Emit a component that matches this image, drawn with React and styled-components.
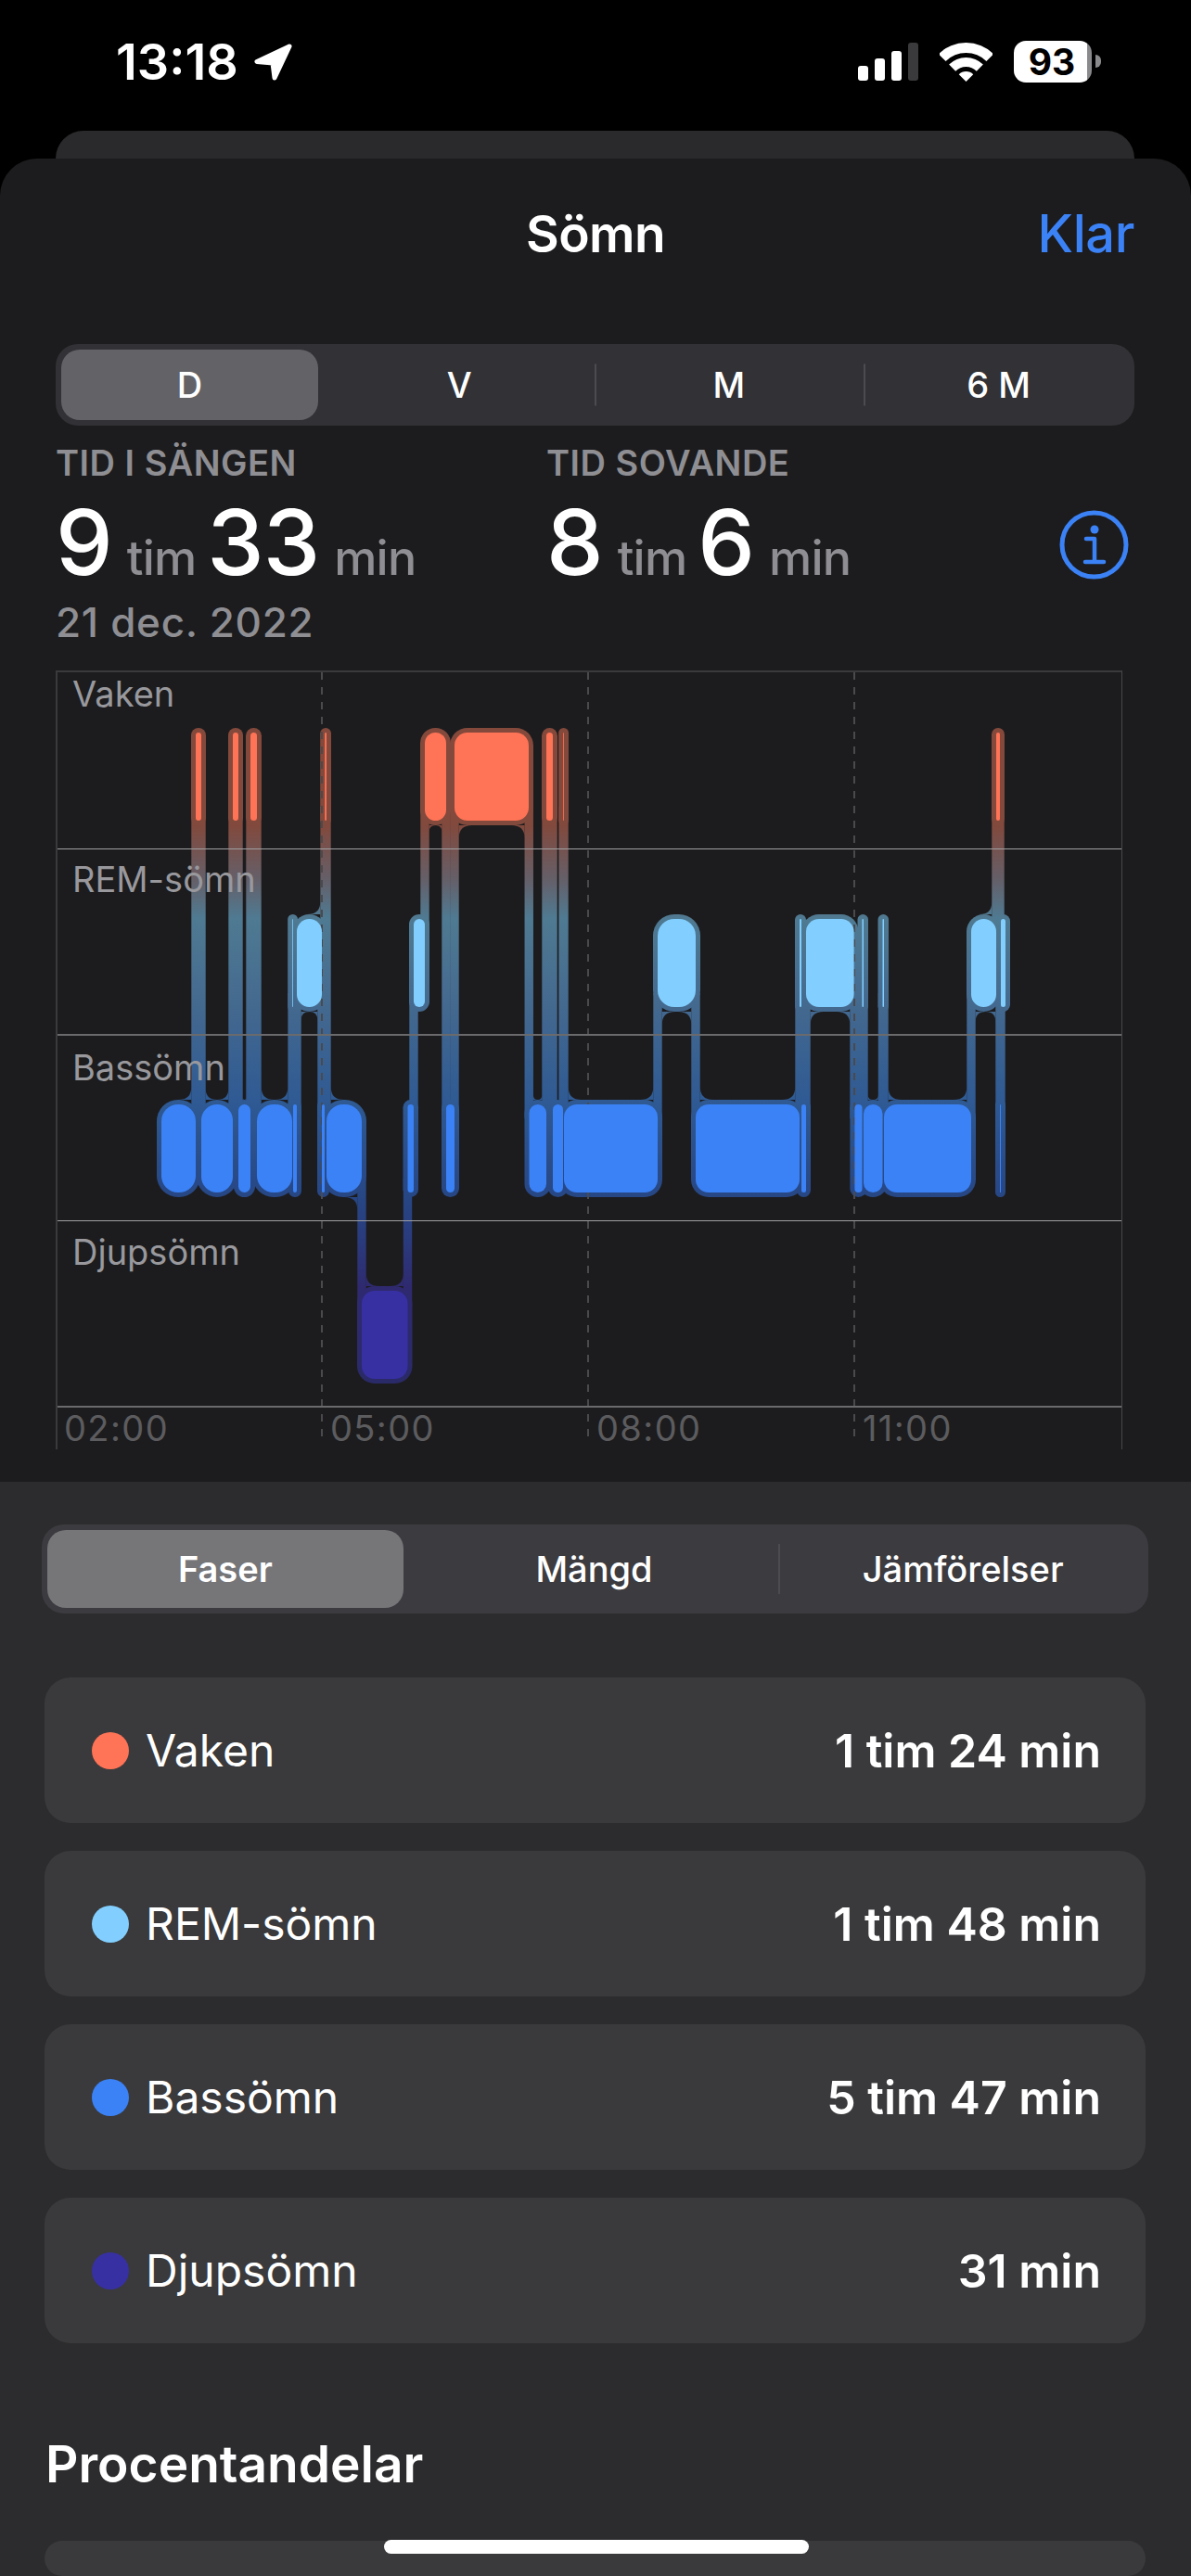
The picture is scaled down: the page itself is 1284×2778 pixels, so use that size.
import React from "react";
import styled, { createGlobalStyle } from "styled-components";

const GlobalStyle = createGlobalStyle`
  * { box-sizing: border-box; }
  html, body { margin: 0; padding: 0; background: #000; }
  body { font-family: Inter, "Liberation Sans", sans-serif; color: #fff; }
`;

const Screen = styled.div`
  position: relative;
  width: 1284px;
  height: 2778px;
  overflow: hidden;
  background: #000;
  display: flex;
  flex-direction: column;
`;

const StatusBar = styled.div`
  height: 141px;
  flex: none;
  padding: 0 97px 8px 125px;
  display: flex;
  align-items: center;
  justify-content: space-between;
`;

const StatusGroup = styled.div`
  display: flex;
  align-items: center;
  gap: ${({ $gap }) => $gap}px;
`;

const Time = styled.div`
  font-size: 54px;
  font-weight: 600;
  line-height: 60px;
`;

const Battery = styled.div`
  position: relative;
  width: 84px;
  height: 45px;
  margin-right: 10px;
  border-radius: 13px;
  background: linear-gradient(90deg, #fff 94%, #8a8a8d 94%);
  color: #000;
  font-size: 39px;
  font-weight: 700;
  line-height: 45px;
  text-align: center;
  padding-right: 2px;

  &::after {
    content: "";
    position: absolute;
    left: 88px;
    top: 15px;
    width: 6px;
    height: 14px;
    border-radius: 0 7px 7px 0;
    background: #8a8a8d;
  }
`;

const BackSheet = styled.div`
  flex: none;
  height: 30px;
  margin: 0 61px 0 60px;
  border-radius: 30px 30px 0 0;
  background: #2a2a2c;
`;

const Sheet = styled.div`
  flex: 1;
  display: flex;
  flex-direction: column;
  border-radius: 40px 40px 0 0;
  background: #1c1c1e;
  overflow: hidden;
`;

const Header = styled.div`
  flex: none;
  height: 162px;
  margin-bottom: 38px;
  padding: 0 61px;
  display: grid;
  grid-template-columns: 1fr auto 1fr;
  align-items: center;
`;

const Title = styled.div`
  grid-column: 2;
  font-size: 55px;
  font-weight: 600;
  letter-spacing: -0.6px;
`;

const DoneButton = styled.div`
  justify-self: end;
  color: #3b82f6;
  font-size: 56px;
  font-weight: 500;
  letter-spacing: -0.4px;
`;

const SegmentTrack = styled.div`
  flex: none;
  height: ${({ $height }) => $height}px;
  margin: ${({ $margin }) => $margin};
  display: grid;
  grid-template-columns: repeat(${({ $count }) => $count}, 1fr);
  border-radius: 24px;
  background: ${({ $bg }) => $bg};
`;

const SegmentCell = styled.div`
  position: relative;
  display: flex;

  &::before {
    content: "";
    display: ${({ $divider }) => ($divider ? "block" : "none")};
    position: absolute;
    left: -1px;
    top: 50%;
    width: 2px;
    height: ${({ $dividerHeight }) => $dividerHeight}px;
    transform: translateY(-50%);
    background: #4c4c50;
  }
`;

const SegmentLabel = styled.div`
  flex: 1;
  margin: 6px 8px 6px 6px;
  display: flex;
  align-items: center;
  justify-content: center;
  border-radius: 20px;
  font-size: 38px;
  font-weight: ${({ $active, $boldActive }) => ($active && $boldActive ? 600 : 450)};
  background: ${({ $active, $activeBg }) => ($active ? $activeBg : "transparent")};
`;

const Stats = styled.div`
  flex: none;
  height: 264px;
  padding: 18px 67px 0 60px;
  display: flex;
`;

const StatColumn = styled.div`
  flex: none;
  width: ${({ $width }) => $width}px;
`;

const StatLabel = styled.div`
  color: #8e8e93;
  font-size: 38px;
  font-weight: 600;
  line-height: 44px;
  letter-spacing: 0.5px;
`;

const StatValue = styled.div`
  height: 96px;
  margin-top: 16px;
  display: flex;
  align-items: baseline;
  line-height: 96px;
`;

const StatNumber = styled.span`
  font-size: 98px;
  font-weight: 500;
  letter-spacing: -1px;
`;

const StatUnit = styled.span`
  margin: 0 12px 0 16px;
  color: #8e8e93;
  font-size: 52px;
  font-weight: 500;
  letter-spacing: -0.8px;
`;

const StatDate = styled.div`
  margin-top: 13px;
  color: #8e8e93;
  font-size: 44px;
  font-weight: 500;
  line-height: 50px;
  letter-spacing: 0.7px;
`;

const InfoIcon = styled.svg`
  margin: 73px 0 0 auto;
  flex: none;
`;

const Chart = styled.div`
  position: relative;
  flex: none;
  width: 1150px;
  height: 840px;
  margin-left: 60px;
  border-top: 2px solid #3a3a3c;
  border-left: 2px solid #3a3a3c;
  border-right: 1px solid #48484a;
`;

const ChartDrawing = styled.svg`
  position: absolute;
  left: -2px;
  top: -2px;
`;

const ChartRow = styled.div`
  position: relative;
  height: ${({ $height }) => $height}px;
  padding: ${({ $top }) => $top}px 0 0 16px;
  border-bottom: ${({ $line }) => $line};
  color: #98989d;
  font-size: 38px;
  line-height: 40px;
`;

const AxisRow = styled.div`
  position: relative;
  display: grid;
  grid-template-columns: repeat(4, 287px);
  height: 45px;
  padding-top: 3px;
  color: #5c5c5f;
  font-size: 38px;
  line-height: 38px;
  letter-spacing: 1.4px;
`;

const AxisLabel = styled.div`
  padding-left: 7px;
`;

const Panel = styled.div`
  flex: none;
  margin-top: 35px;
  height: 1180px;
  padding-top: 46px;
  display: flex;
  flex-direction: column;
  background: #2c2c2e;
`;

const PhaseList = styled.div`
  margin: 69px 49px 0 48px;
  display: flex;
  flex-direction: column;
  gap: 30px;
`;

const PhaseCard = styled.div`
  height: 157px;
  padding: 0 48px 0 51px;
  display: flex;
  align-items: center;
  border-radius: 28px;
  background: #3a3a3c;
`;

const PhaseDot = styled.div`
  width: 40px;
  height: 40px;
  margin-right: 18px;
  border-radius: 50%;
  background: ${({ $color }) => $color};
`;

const PhaseName = styled.div`
  flex: 1;
  font-size: 48px;
  font-weight: 400;
`;

const PhaseValue = styled.div`
  font-size: 50px;
  font-weight: 600;
`;

const SectionHeading = styled.div`
  margin: 100px 0 53px 49px;
  font-size: 55px;
  font-weight: 600;
  line-height: 60px;
`;

const NextCard = styled.div`
  height: 100px;
  margin: 0 49px 0 48px;
  border-radius: 28px;
  background: #3a3a3c;
`;

const HomeIndicator = styled.div`
  position: absolute;
  left: 414px;
  top: 2739px;
  width: 458px;
  height: 15px;
  border-radius: 8px;
  background: #fff;
`;

const COLORS = { W: "#ff7356", R: "#82cfff", B: "#3b82f6", D: "#3730a3" };

const STAGE_ROWS = {
  W: { top: 790, bottom: 885 },
  R: { top: 991, bottom: 1086 },
  B: { top: 1191, bottom: 1286 },
  D: { top: 1392, bottom: 1487 },
};

// page x coordinates of each sleep stage, in time order
const SEGMENTS = [
  ["B", 174, 211], ["W", 211, 217], ["B", 217, 251], ["W", 251, 257],
  ["B", 257, 270], ["W", 270, 277], ["B", 277, 315], ["R", 315.2, 316],
  ["B", 316, 320], ["R", 320, 347], ["B", 347, 350], ["W", 350.2, 352],
  ["B", 352, 390], ["D", 390, 439.5], ["B", 439.5, 446], ["R", 446, 458],
  ["W", 458, 481], ["B", 481, 490], ["W", 490, 570], ["B", 570.5, 589],
  ["W", 589, 596], ["B", 596, 607], ["W", 607.2, 608], ["B", 608, 709],
  ["R", 709, 750], ["B", 750, 862], ["R", 862, 864], ["B", 864, 869],
  ["R", 869, 920.6], ["B", 921.4, 929.5], ["R", 929.5, 931], ["B", 931, 951.5],
  ["R", 951.5, 953], ["B", 953, 1047], ["R", 1047, 1074], ["W", 1074, 1078],
  ["B", 1078, 1079], ["R", 1079, 1084],
];

const HALO = 5;
const STEM = 4.7;
const FILLET = 14;

const cornerRadius = (width) => (width < 48 ? Math.min(width / 2, 18) : 14);

const merge = (spans) => {
  const sorted = [...spans].sort((a, b) => a[0] - b[0]);
  return sorted.reduce((out, span) => {
    const last = out[out.length - 1];
    if (last && span[0] <= last[1]) last[1] = Math.max(last[1], span[1]);
    else out.push([...span]);
    return out;
  }, []);
};

const stems = SEGMENTS.slice(1).flatMap((seg, i) => {
  const prev = SEGMENTS[i];
  if (prev[0] === seg[0]) return [];
  const x = (prev[2] + seg[1]) / 2;
  const upper = STAGE_ROWS[prev[0]].top < STAGE_ROWS[seg[0]].top ? prev[0] : seg[0];
  const lower = upper === prev[0] ? seg[0] : prev[0];
  return [{ x1: x - STEM, x2: x + STEM, y1: STAGE_ROWS[upper].bottom - 15, y2: STAGE_ROWS[lower].top + 15 }];
});

// concave corners where stems leave the halo of a row
const fillets = Object.entries(STAGE_ROWS).flatMap(([key, row]) => {
  const halos = merge(
    SEGMENTS.filter((s) => s[0] === key).map((s) => [s[1] - HALO, s[2] + HALO])
  );
  return [[row.top - HALO, -1], [row.bottom + HALO, 1]].flatMap(([y, dir]) => {
    const crossing = merge(
      stems.filter((s) => s.y1 < y + dir && s.y2 > y + dir).map((s) => [s.x1, s.x2])
    );
    const paths = [];
    crossing.forEach(([c1, c2], i) => {
      const halo = halos.find((h) => h[0] <= c2 && h[1] >= c1);
      if (!halo) return;
      const prev = crossing[i - 1];
      const next = crossing[i + 1];
      const left = prev && prev[1] > halo[0] ? (c1 - prev[1]) / 2 : c1 - halo[0] - 14;
      const right = next && next[0] < halo[1] ? (next[0] - c2) / 2 : halo[1] - c2 - 14;
      const rl = Math.min(FILLET, left);
      const rr = Math.min(FILLET, right);
      if (rl > 1) paths.push(`M${c1} ${y}L${c1 - rl} ${y}Q${c1} ${y} ${c1} ${y + dir * rl}Z`);
      if (rr > 1) paths.push(`M${c2} ${y}L${c2 + rr} ${y}Q${c2} ${y} ${c2} ${y + dir * rr}Z`);
    });
    return paths;
  });
});

const HALO_STOPS = [
  [785, "#84493b"], [890, "#82493d"], [950, "#64606a"], [990, "#4f7a92"],
  [1086, "#44698f"], [1186, "#2f5a93"], [1291, "#274684"], [1340, "#2a3a7c"],
  [1387, "#2f2a70"], [1492, "#2a2a68"],
];

const SleepChart = () => (
  <ChartDrawing width="1150" height="840" viewBox="60 723 1150 840">
    <defs>
      <linearGradient id="halo" gradientUnits="userSpaceOnUse" x1="0" y1="785" x2="0" y2="1492">
        {HALO_STOPS.map(([y, color]) => (
          <stop key={y} offset={(y - 785) / 707} stopColor={color} />
        ))}
      </linearGradient>
    </defs>
    <g fill="url(#halo)">
      {SEGMENTS.map(([key, x1, x2]) => {
        const width = x2 - x1;
        return (
          <rect
            key={`h${x1}`}
            x={x1 - HALO}
            y={STAGE_ROWS[key].top - HALO}
            width={width + HALO * 2}
            height={105}
            rx={Math.min(cornerRadius(width) + HALO, (width + HALO * 2) / 2)}
          />
        );
      })}
      {stems.map((s) => (
        <rect key={`s${s.x1}`} x={s.x1} y={s.y1} width={s.x2 - s.x1} height={s.y2 - s.y1} />
      ))}
      {fillets.map((d) => (
        <path key={d} d={d} />
      ))}
    </g>
    {[347, 634, 921].map((x) => (
      <line key={x} x1={x} x2={x} y1="725" y2="1557" stroke="#4a4a4d" strokeWidth="2" strokeDasharray="8 8" />
    ))}
    {SEGMENTS.map(([key, x1, x2]) => {
      const width = x2 - x1;
      return (
        <rect
          key={`b${x1}`}
          x={x1}
          y={STAGE_ROWS[key].top}
          width={width}
          height={95}
          rx={cornerRadius(width)}
          fill={COLORS[key]}
        />
      );
    })}
  </ChartDrawing>
);

const wifiBand = (outer, inner) => {
  const a = Math.SQRT1_2;
  const cx = 28.5;
  const cy = 42;
  const o = outer * a;
  const i = inner * a;
  return `M${cx - o} ${cy - o}A${outer} ${outer} 0 0 1 ${cx + o} ${cy - o}L${cx + i} ${cy - i}A${inner} ${inner} 0 0 0 ${cx - i} ${cy - i}Z`;
};

const SEGMENTS_TOP = ["D", "V", "M", "6 M"];
const SEGMENTS_BOTTOM = ["Faser", "Mängd", "Jämförelser"];

const PHASES = [
  { name: "Vaken", value: "1 tim 24 min", color: COLORS.W },
  { name: "REM-sömn", value: "1 tim 48 min", color: COLORS.R },
  { name: "Bassömn", value: "5 tim 47 min", color: COLORS.B },
  { name: "Djupsömn", value: "31 min", color: COLORS.D },
];

const Segmented = ({ items, height, margin, bg, activeBg, dividerHeight, boldActive }) => (
  <SegmentTrack $count={items.length} $height={height} $margin={margin} $bg={bg}>
    {items.map((item, i) => (
      <SegmentCell key={item} $divider={i > 1} $dividerHeight={dividerHeight}>
        <SegmentLabel $active={i === 0} $activeBg={activeBg} $boldActive={boldActive}>
          {item}
        </SegmentLabel>
      </SegmentCell>
    ))}
  </SegmentTrack>
);

const App = () => (
  <Screen>
    <GlobalStyle />
    <StatusBar>
      <StatusGroup $gap={17}>
        <Time>13:18</Time>
        <svg width="41" height="40" viewBox="0 0 41 40">
          <path d="M38 3L3 19.5L20 21L22 37Z" fill="#fff" stroke="#fff" strokeWidth="5" strokeLinejoin="round" />
        </svg>
      </StatusGroup>
      <StatusGroup $gap={23}>
        <svg width="65" height="41" viewBox="0 0 65 41">
          <rect x="0" y="25" width="11" height="16" rx="3" fill="#fff" />
          <rect x="18" y="17" width="11" height="24" rx="3" fill="#fff" />
          <rect x="36" y="9" width="11" height="32" rx="3" fill="#fff" />
          <rect x="54" y="0" width="11" height="41" rx="3" fill="#3a3a3c" />
        </svg>
        <svg width="57" height="42" viewBox="0 0 57 42" fill="#fff">
          <path d={wifiBand(42, 31)} />
          <path d={wifiBand(26, 16)} />
          <path d={wifiBand(11, 0)} />
        </svg>
        <Battery>93</Battery>
      </StatusGroup>
    </StatusBar>
    <BackSheet />
    <Sheet>
      <Header>
        <Title>Sömn</Title>
        <DoneButton>Klar</DoneButton>
      </Header>
      <Segmented
        items={SEGMENTS_TOP}
        height={88}
        margin="0 61px 0 60px"
        bg="#323236"
        activeBg="#636367"
        dividerHeight={45}
      />
      <Stats>
        <StatColumn $width={529}>
          <StatLabel>TID I SÄNGEN</StatLabel>
          <StatValue>
            <StatNumber>9</StatNumber>
            <StatUnit>tim</StatUnit>
            <StatNumber>33</StatNumber>
            <StatUnit>min</StatUnit>
          </StatValue>
          <StatDate>21 dec. 2022</StatDate>
        </StatColumn>
        <StatColumn $width={400}>
          <StatLabel>TID SOVANDE</StatLabel>
          <StatValue>
            <StatNumber>8</StatNumber>
            <StatUnit>tim</StatUnit>
            <StatNumber>6</StatNumber>
            <StatUnit>min</StatUnit>
          </StatValue>
        </StatColumn>
        <InfoIcon width="75" height="75" viewBox="0 0 75 75" fill="none" stroke="#3b82f6">
          <circle cx="37.5" cy="37.5" r="34.5" strokeWidth="5" />
          <circle cx="38" cy="21" r="4.5" fill="#3b82f6" stroke="none" />
          <path d="M29 31h9v25M28 56h20" strokeWidth="4.5" strokeLinecap="round" strokeLinejoin="round" />
        </InfoIcon>
      </Stats>
      <Chart>
        <SleepChart />
        <ChartRow $height={191} $top={3} $line="1px solid #a0a0a2">Vaken</ChartRow>
        <ChartRow $height={201} $top={12} $line="2px solid #6a6a6c">REM-sömn</ChartRow>
        <ChartRow $height={200} $top={14} $line="1px solid #a0a0a2">Bassömn</ChartRow>
        <ChartRow $height={201} $top={13} $line="2px solid #6a6a6c">Djupsömn</ChartRow>
        <AxisRow>
          {["02:00", "05:00", "08:00", "11:00"].map((t) => (
            <AxisLabel key={t}>{t}</AxisLabel>
          ))}
        </AxisRow>
      </Chart>
      <Panel>
        <Segmented
          items={SEGMENTS_BOTTOM}
          height={96}
          margin="0 46px 0 45px"
          bg="#3c3c40"
          activeBg="#767679"
          dividerHeight={54}
          boldActive
        />
        <PhaseList>
          {PHASES.map((p) => (
            <PhaseCard key={p.name}>
              <PhaseDot $color={p.color} />
              <PhaseName>{p.name}</PhaseName>
              <PhaseValue>{p.value}</PhaseValue>
            </PhaseCard>
          ))}
        </PhaseList>
        <SectionHeading>Procentandelar</SectionHeading>
        <NextCard />
      </Panel>
    </Sheet>
    <HomeIndicator />
  </Screen>
);

export default App;
